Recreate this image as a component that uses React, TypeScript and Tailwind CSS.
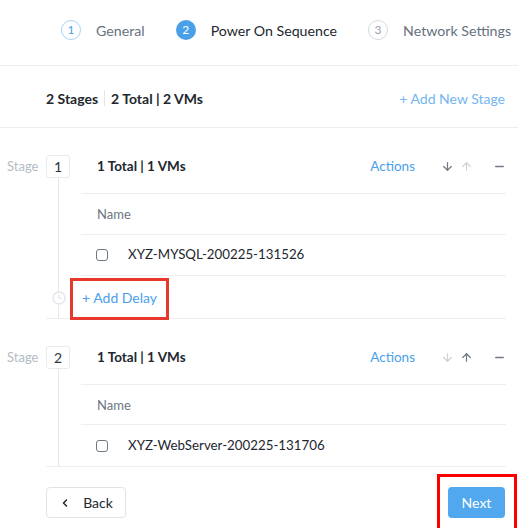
import { ArrowDown, ArrowUp, ChevronLeft, Minus } from "lucide-react"

const steps = [
  { n: 1, label: "General", state: "done" },
  { n: 2, label: "Power On Sequence", state: "active" },
  { n: 3, label: "Network Settings", state: "todo" },
]

const stages = [
  { n: 1, vm: "XYZ-MYSQL-200225-131526", downOn: true, upOn: false, delay: true },
  { n: 2, vm: "XYZ-WebServer-200225-131706", downOn: false, upOn: true, delay: false },
]

function Rail() {
  return (
    <div className="w-[35px] shrink-0 pl-[12px] flex">
      <div className="w-px bg-[#e6e9ec]" />
    </div>
  )
}

function ClockIcon() {
  return (
    <svg width="14" height="14" viewBox="0 0 14 14" fill="none">
      <circle cx="7" cy="7" r="6" stroke="#e1e5e9" strokeWidth="1.3" fill="white" />
      <path d="M7 3.8V7.2H9.3" stroke="#e1e5e9" strokeWidth="1.3" strokeLinecap="round" />
    </svg>
  )
}

function Stage({ s }: { s: (typeof stages)[number] }) {
  return (
    <div className="flex">
      <div className="w-[46px] shrink-0 pl-[7px] pt-[27px]">
        <div className="h-[23px] flex items-center text-[13px] text-[#b3bcc5]">Stage</div>
      </div>
      <div className="flex-1 border-b border-[#eceef0]">
        {/* header */}
        <div className="flex h-[66px]">
          <div className="w-[35px] shrink-0 flex flex-col">
            <div className="mt-[27px] w-[24px] h-[23px] border border-[#e8ebee] rounded-[3px] flex items-center justify-center text-[14px] text-[#2c3440]">
              {s.n}
            </div>
            <div className="ml-[12px] w-px flex-1 bg-[#e6e9ec]" />
          </div>
          <div className="flex-1 border-b border-[#eceef0] pl-[16px] pt-[27px]">
            <div className="h-[23px] flex items-center">
              <span className="text-[13.5px] font-bold text-[#22272e]">1 Total | 1 VMs</span>
              <span className="ml-auto text-[13.5px] text-[#4aa0ec]">Actions</span>
              <ArrowDown
                className={`ml-[26px] ${s.downOn ? "text-[#6f7883]" : "text-[#cdd3d9]"}`}
                size={13}
                strokeWidth={2.2}
              />
              <ArrowUp
                className={`ml-[6px] ${s.upOn ? "text-[#6f7883]" : "text-[#cdd3d9]"}`}
                size={13}
                strokeWidth={2.2}
              />
              <Minus className="ml-[20px] text-[#6f7883]" size={13} strokeWidth={2.4} />
            </div>
          </div>
        </div>
        {/* name header */}
        <div className={`flex ${s.delay ? "h-[41px]" : "h-[40px]"}`}>
          <Rail />
          <div className="flex-1 border-b border-[#eceef0] pl-[16px] pt-[2px] flex items-center text-[13px] text-[#6b7683]">
            Name
          </div>
        </div>
        {/* vm row */}
        <div className="flex h-[41px]">
          <Rail />
          <div
            className={`flex-1 pl-[15px] flex items-center ${s.delay ? "border-b border-[#eceef0]" : ""}`}
          >
            <span className="w-[12px] h-[12px] rounded-[3px] border-[1.5px] border-[#6f7883]" />
            <span className="ml-[20px] text-[13.3px] text-[#22272e]">{s.vm}</span>
          </div>
        </div>
        {s.delay && (
          <div className="flex h-[42px]">
            <div className="w-[35px] shrink-0 flex flex-col items-start pl-[6px]">
              <div className="ml-[6px] w-px h-[15px] bg-[#e6e9ec]" />
              <ClockIcon />
              <div className="ml-[6px] w-px flex-1 bg-[#e6e9ec]" />
            </div>
            <div className="flex-1 flex items-center pl-[1px] relative">
              <span className="text-[14px] text-[#4aa0ec]">+ Add Delay</span>
              <div className="absolute left-[-11px] top-[2px] w-[99px] h-[42px] border-[3px] border-[#e8382b]" />
            </div>
          </div>
        )}
      </div>
      <div className="w-[12px] shrink-0" />
    </div>
  )
}

export default function App() {
  return (
    <div
      className="w-[518px] h-[528px] bg-white overflow-hidden relative"
      style={{ fontFamily: "Lato, 'Open Sans', sans-serif" }}
    >
      {/* stepper */}
      <div className="h-[66px] border-b border-[#eceef0] flex items-center pl-[61px] pb-[4px] whitespace-nowrap">
        {steps.map((st) => (
          <div key={st.n} className="flex items-center shrink-0 mr-[31px]">
            <div
              className={
                st.state === "active"
                  ? "w-[20px] h-[20px] rounded-full bg-[#4a9fe9] text-white flex items-center justify-center text-[12px]"
                  : st.state === "done"
                    ? "w-[20px] h-[20px] rounded-full border border-[#a8d3f6] text-[#4a9fe9] flex items-center justify-center text-[12px]"
                    : "w-[20px] h-[20px] rounded-full border border-[#d5dade] text-[#9aa4ae] flex items-center justify-center text-[12px]"
              }
            >
              {st.n}
            </div>
            <span
              className={`ml-[15px] text-[14.2px] ${st.state === "active" ? "text-[#22272e]" : "text-[#66717e]"}`}
            >
              {st.label}
            </span>
          </div>
        ))}
      </div>

      {/* summary */}
      <div className="h-[62px] border-b border-[#eceef0] flex items-center pl-[46px] pr-[13px] pt-[3px]">
        <span className="text-[14px] font-bold text-[#22272e]">2 Stages</span>
        <span className="mx-[6px] w-px h-[16px] bg-[#e3e6e9]" />
        <span className="text-[14px] font-bold text-[#22272e]">2 Total | 2 VMs</span>
        <span className="ml-auto text-[14px] text-[#74b6f0]">+ Add New Stage</span>
      </div>

      {stages.map((s) => (
        <Stage key={s.n} s={s} />
      ))}

      {/* footer */}
      <div className="flex items-center pl-[46px] pr-[13px] pt-[20px]">
        <button className="w-[80px] h-[31px] rounded-[4px] border border-[#dfe3e7] flex items-center justify-center gap-[12px] text-[14px] text-[#22272e]">
          <ChevronLeft size={12} strokeWidth={3} />
          <span>Back</span>
        </button>
        <div className="ml-auto relative">
          <button className="w-[57px] h-[31px] rounded-[4px] bg-[#52a8ef] text-white text-[14px]">Next</button>
          <div className="absolute left-[-11px] top-[-13px] w-[80px] h-[60px] border-[3px] border-[#ff0000]" />
        </div>
      </div>
    </div>
  )
}
